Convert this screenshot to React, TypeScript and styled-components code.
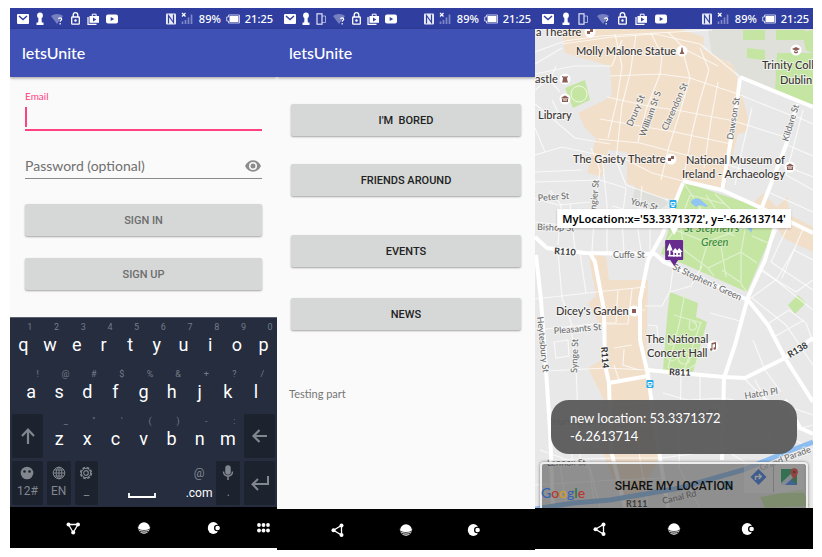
import React from 'react';
import styled, { createGlobalStyle } from 'styled-components';

const GlobalStyle = createGlobalStyle`
  * { box-sizing: border-box; }
  body {
    margin: 0;
    background: #fff;
    font-family: Lato, "Open Sans", sans-serif;
  }
  button, input { font-family: inherit; }
`;

const Page = styled.main`
  display: grid;
  grid-template-columns: 267fr 258fr 278fr;
  align-items: start;
  padding: 8px 9px 7px 10px;
`;

const Phone = styled.section`
  display: flex;
  flex-direction: column;
  min-width: 0;
  overflow: hidden;
`;

const StatusBar = styled.header`
  display: flex;
  align-items: center;
  height: 21px;
  padding: 0 4px 0 7px;
  background: #303f9f;
  color: #fff;
  font-family: "Noto Sans", sans-serif;
  font-size: 11px;
  font-weight: 500;
  line-height: 20px;
`;

const StatusIcons = styled.div<{ $gap: number }>`
  display: flex;
  align-items: center;
  gap: ${(p) => p.$gap}px;
  margin-right: auto;
`;

const StatusInfo = styled.div`
  display: flex;
  align-items: center;
  gap: 5px;
`;

const AppBar = styled.div`
  display: flex;
  align-items: center;
  height: 48px;
  padding: 0 12px;
  background: #3f51b5;
  color: #fff;
  box-shadow: 0 1px 3px rgba(0, 0, 0, 0.4);
  position: relative;
`;

const Title = styled.h1`
  margin: 0;
  font-size: 16px;
  font-weight: 500;
  line-height: 20px;
`;

const Form = styled.form`
  display: flex;
  flex-direction: column;
  height: 240px;
  padding: 12px 15px 0;
  background: #fafafa;
`;

const EmailLabel = styled.label`
  color: #ff4081;
  font-size: 10px;
  line-height: 14px;
`;

const EmailInput = styled.input`
  height: 28px;
  padding: 0 4px;
  border: 0;
  border-bottom: 2px solid #ff4081;
  outline: 0;
  font-size: 14px;
  background: linear-gradient(#ff4081, #ff4081) 0 4px / 2px 20px no-repeat;
`;

const PasswordRow = styled.div`
  display: flex;
  align-items: center;
  height: 26px;
  margin: 22px 0 25px;
  border-bottom: 1px solid #8a8a8a;
`;

const PasswordLabel = styled.label`
  color: #707070;
  font-size: 14px;
  line-height: 20px;
  white-space: nowrap;
`;

const PasswordInput = styled.input`
  flex: 1;
  min-width: 0;
  border: 0;
  outline: 0;
  background: none;
`;

const IconButton = styled.button`
  display: flex;
  align-items: center;
  justify-content: center;
  padding: 0;
  border: 0;
  background: none;
  color: inherit;
`;

const RaisedButton = styled.button<{ $muted?: boolean }>`
  flex: none;
  width: 100%;
  height: 32px;
  padding: 0;
  border: 0;
  border-radius: 2px;
  background: #d6d8d7;
  box-shadow: 0 1px 2px rgba(0, 0, 0, 0.35);
  color: ${(p) => (p.$muted ? '#6c6d6d' : '#222')};
  font-family: Roboto, sans-serif;
  font-size: 11px;
  font-weight: 500;
  white-space: pre;
`;

const SignButtons = styled.div`
  display: grid;
  gap: 22px;
`;

const Keyboard = styled.div`
  display: grid;
  grid-template-rows: repeat(4, 44px);
  gap: 3px;
  height: 190px;
  padding: 2px 0;
  border-top: 1px solid #5b6170;
  background: #252d3f;
  color: #fff;
  font-family: Roboto, sans-serif;
`;

const TopRow = styled.div`
  display: grid;
  grid-template-columns: repeat(10, 1fr);
`;

const HomeRow = styled.div`
  display: grid;
  grid-template-columns: repeat(9, 1fr);
  padding: 0 7px;
`;

const LowRow = styled.div`
  display: grid;
  grid-template-columns: 31fr repeat(7, 24fr) 31fr;
  gap: 4px;
  padding: 0 2px;
`;

const Key = styled.button`
  display: flex;
  flex-direction: column;
  align-items: center;
  padding: 0;
  border: 0;
  background: none;
  color: #fff;
  font-family: inherit;
  font-size: 18px;
  line-height: 22px;
`;

const Hint = styled.span`
  padding-left: 13px;
  color: #757b88;
  font-size: 9px;
  line-height: 14px;
`;

const FunctionKey = styled.button<{ $span?: number; $plain?: boolean }>`
  grid-column: span ${(p) => p.$span ?? 1};
  display: flex;
  flex-direction: column;
  align-items: center;
  justify-content: center;
  gap: 2px;
  padding: 0;
  border: 0;
  border-radius: 2px;
  background: ${(p) => (p.$plain ? 'none' : '#1d232e')};
  color: ${(p) => (p.$plain ? '#fff' : '#82868f')};
  font-family: inherit;
  font-size: 12px;
  line-height: 18px;
`;

const SpaceKey = styled(FunctionKey)`
  justify-content: flex-end;
  padding-bottom: 6px;
`;

const AtHint = styled.span`
  color: #82868f;
`;

const NavBar = styled.nav`
  display: grid;
  grid-template-columns: 1fr repeat(3, 26.5%) 1fr;
  align-items: center;
  justify-items: center;
  height: 41px;
  background: #000;
  color: #fff;
`;

const Menu = styled.div`
  display: flex;
  flex-direction: column;
  height: 432px;
  padding: 27px 14px 0;
  background: #fafafa;
`;

const MenuGroup = styled.div`
  display: grid;
  gap: 28px;
  margin-bottom: 39px;
`;

const MenuGroupWide = styled(MenuGroup)`
  gap: 31px;
  margin-bottom: 55px;
`;

const Note = styled.p`
  margin: 0 0 0 -2px;
  color: #757575;
  font-size: 11px;
  line-height: 18px;
`;

const MapScreen = styled.div`
  position: relative;
  display: flex;
  flex-direction: column;
  justify-content: flex-end;
  height: 479px;
  overflow: hidden;
  background: #e8e8e8;
`;

const MapDrawing = styled.svg`
  position: absolute;
  inset: 0;
  width: 100%;
  height: 100%;
`;

const Pin = styled.div`
  position: absolute;
  top: 180px;
  left: 50%;
  transform: translateX(-50%);
  display: flex;
  flex-direction: column;
  align-items: center;
`;

const PinInfo = styled.div`
  padding: 0 5px;
  background: #fff;
  box-shadow: 0 1px 2px rgba(0, 0, 0, 0.2);
  color: #000;
  font-family: "Noto Sans", sans-serif;
  font-size: 11px;
  font-weight: 600;
  line-height: 19px;
  white-space: nowrap;
`;

const Toast = styled.output`
  position: relative;
  z-index: 1;
  margin: 0 16px 8px;
  padding: 9px 19px;
  border-radius: 18px;
  background: rgba(88, 88, 88, 0.94);
  color: #fff;
  font-size: 13px;
  line-height: 18px;
  white-space: pre-line;
`;

const ShareButton = styled.button`
  position: relative;
  height: 46px;
  margin: 0 5px;
  padding: 0;
  border: 2px solid #eee;
  border-bottom: 0;
  border-radius: 4px 4px 0 0;
  background: rgba(70, 70, 70, 0.55);
  box-shadow: 0 0 3px rgba(0, 0, 0, 0.5);
  color: #111;
  font-family: Roboto, sans-serif;
  font-size: 12px;
  font-weight: 500;
`;

const MailIcon = () => (
  <svg width="12" height="12" viewBox="0 0 12 12">
    <rect y="1" width="12" height="10" rx="1" fill="#fff" />
    <path d="M2 3l4 3.500L10 3" fill="none" stroke="#303f9f" strokeWidth="1.400" />
  </svg>
);
const KeyholeIcon = () => (
  <svg width="8" height="14" viewBox="0 0 8 14" fill="#fff">
    <circle cx="4" cy="3.500" r="2.900" />
    <path d="M2.500 5h3l.3 5.500H7.500V13H.5v-2.500H2.200z" />
  </svg>
);
const DevicesIcon = () => (
  <svg width="11" height="12" viewBox="0 0 11 12" fill="none" stroke="#dfe2f4">
    <rect x="1" y=".8" width="5" height="10.400" strokeWidth="1.200" />
    <path d="M6 3h3.500v6.500H6" opacity=".65" />
  </svg>
);
const WifiIcon = () => (
  <svg width="13" height="12" viewBox="0 0 13 12">
    <path d="M0 3C3 .3 9 .3 12 3L6 11z" fill="#7680c0" />
    <path d="M7.500 6c.3-1.600 3.200-1.500 3.200.2 0 1.200-1.500 1.200-1.500 2.500M9.200 10v1.400" fill="none" stroke="#fff" strokeWidth="1.200" />
  </svg>
);
const LockIcon = () => (
  <svg width="9" height="13" viewBox="0 0 9 13" fill="none" stroke="#fff" strokeWidth="1.300">
    <rect x=".7" y="5" width="7.600" height="7.200" rx=".6" />
    <path d="M2.200 5V3a2.300 2.300 0 014.600 0v2" />
    <circle cx="4.500" cy="8.600" r=".6" fill="#fff" />
  </svg>
);
const StoreIcon = () => (
  <svg width="12" height="12" viewBox="0 0 12 12">
    <path d="M1 4v7.300h8.500" fill="none" stroke="#fff" strokeWidth="1.200" />
    <path d="M2.500 3H12v6.800H2.500z" fill="#fff" />
    <path d="M5.300 3V1.200h3.800V3" fill="none" stroke="#fff" />
    <path d="M6 4.500l3.300 2L6 8.500z" fill="#303f9f" />
  </svg>
);
const PlayIcon = () => (
  <svg width="12" height="12" viewBox="0 0 12 12">
    <rect y="1.500" width="12" height="9" rx="2" fill="#fff" />
    <path d="M4.700 4l3.500 2-3.500 2z" fill="#303f9f" />
  </svg>
);
const NfcIcon = () => (
  <svg width="10" height="12" viewBox="0 0 10 12">
    <rect y=".5" width="10" height="11" rx="1" fill="#e8eaf6" />
    <path d="M2.500 10.500V2.500L7.500 9.500V1.500" fill="none" stroke="#303f9f" strokeWidth="1.200" />
  </svg>
);
const SignalIcon = () => (
  <svg width="13" height="13" viewBox="0 0 13 13">
    <path d="M1 1l3.500 3.500M4.500 1L1 4.500" stroke="#fff" strokeWidth="1.200" />
    <path d="M1.500 12V9.500M4.500 12V8M7.500 12V5.500M10.500 12V2.500" stroke="#7f88c6" strokeWidth="1.700" />
  </svg>
);
const BatteryIcon = () => (
  <svg width="14" height="10" viewBox="0 0 14 10">
    <path d="M2.500 1h11v8h-11V7H.7V3h1.800z" fill="none" stroke="#c6cae8" />
    <path d="M3.500 2h9v6h-9z" fill="#fff" />
  </svg>
);

function Status({ devices = false, gap }: { devices?: boolean; gap: number }) {
  return (
    <StatusBar>
      <StatusIcons $gap={gap}>
        <MailIcon />
        <KeyholeIcon />
        {devices && <DevicesIcon />}
        <WifiIcon />
        <LockIcon />
        <StoreIcon />
        <PlayIcon />
      </StatusIcons>
      <StatusInfo>
        <NfcIcon />
        <SignalIcon />
        <span>89%</span>
        <BatteryIcon />
        <span>21:25</span>
      </StatusInfo>
    </StatusBar>
  );
}

const BackIcon = ({ down = false }: { down?: boolean }) => (
  <svg width="14" height="14" viewBox="0 0 14 14" fill="#fff">
    <g transform={down ? 'rotate(-90 7 7)' : undefined}>
      <path d="M2.500 7.200L10.500 2.500V12z" fill="none" stroke="#fff" strokeWidth="1.300" />
      <circle cx="2.500" cy="7.200" r="2" />
      <circle cx="10.500" cy="2.500" r="2" />
      <circle cx="10.500" cy="12" r="2" />
    </g>
  </svg>
);
const HomeIcon = () => (
  <svg width="14" height="14" viewBox="0 0 14 14">
    <circle cx="7" cy="7" r="5.800" fill="#fff" />
    <path d="M1 7.500c2.500 2.300 9.500 2.300 12 0M2.500 10c2.500 1.500 6.500 1.500 9 0" fill="none" stroke="#000" strokeWidth=".9" />
    <path d="M.8 6.500c2 2.500 10.400 2.500 12.400 0" fill="none" stroke="#fff" />
  </svg>
);
const RecentIcon = () => (
  <svg width="14" height="14" viewBox="0 0 14 14">
    <ellipse cx="6.300" cy="7" rx="5.500" ry="6" fill="#fff" />
    <circle cx="10.300" cy="7" r="3.300" fill="#000" />
    <circle cx="10.600" cy="7" r="2.300" fill="#fff" />
  </svg>
);
const DotsIcon = () => (
  <svg width="13" height="10" viewBox="0 0 13 10" fill="#fff">
    {[2, 6.5, 11].map((x) => [2, 7.5].map((y) => <circle key={`${x}-${y}`} cx={x} cy={y} r="1.900" />))}
  </svg>
);

function Navigation({ keyboard = false }: { keyboard?: boolean }) {
  return (
    <NavBar aria-label="System">
      <span />
      <IconButton aria-label="Back"><BackIcon down={keyboard} /></IconButton>
      <IconButton aria-label="Home"><HomeIcon /></IconButton>
      <IconButton aria-label="Recent apps"><RecentIcon /></IconButton>
      {keyboard && <IconButton aria-label="Switch keyboard"><DotsIcon /></IconButton>}
    </NavBar>
  );
}

const topKeys: [string, string][] = [
  ['q', '1'], ['w', '2'], ['e', '3'], ['r', '4'], ['t', '5'],
  ['y', '6'], ['u', '7'], ['i', '8'], ['o', '9'], ['p', '0'],
];
const homeKeys: [string, string][] = [
  ['a', '!'], ['s', '@'], ['d', '#'], ['f', '$'], ['g', '%'],
  ['h', '&'], ['j', '+'], ['k', '?'], ['l', '/'],
];
const lowKeys: [string, string][] = [
  ['z', '_'], ['x', '"'], ['c', "'"], ['v', '('], ['b', ')'], ['n', '-'], ['m', ':'],
];

const renderKeys = (keys: [string, string][]) =>
  keys.map(([letter, hint]) => (
    <Key key={letter} type="button">
      <Hint>{hint}</Hint>
      {letter}
    </Key>
  ));

const GreyLine = { fill: 'none', stroke: '#82868f' };

function OnScreenKeyboard() {
  return (
    <Keyboard>
      <TopRow>{renderKeys(topKeys)}</TopRow>
      <HomeRow>{renderKeys(homeKeys)}</HomeRow>
      <LowRow>
        <FunctionKey aria-label="Shift">
          <svg width="16" height="18" viewBox="0 0 16 18" {...GreyLine} strokeWidth="2.200">
            <path d="M8 17V3M2 9l6-6.500L14 9" />
          </svg>
        </FunctionKey>
        {renderKeys(lowKeys)}
        <FunctionKey aria-label="Backspace">
          <svg width="16" height="14" viewBox="0 0 16 14" {...GreyLine} strokeWidth="2.200">
            <path d="M16 7H3M8.500 1L2.500 7l6 6" />
          </svg>
        </FunctionKey>
      </LowRow>
      <LowRow>
        <FunctionKey>
          <svg width="14" height="14" viewBox="0 0 14 14">
            <circle cx="7" cy="7" r="6.300" fill="#82868f" />
            <circle cx="4.500" cy="5.500" r="1.300" fill="#1d232e" />
            <circle cx="9.500" cy="5.500" r="1.300" fill="#1d232e" />
          </svg>
          12#
        </FunctionKey>
        <FunctionKey>
          <svg width="14" height="14" viewBox="0 0 14 14" {...GreyLine}>
            <circle cx="7" cy="7" r="5.800" />
            <ellipse cx="7" cy="7" rx="2.800" ry="5.800" />
            <path d="M7 1v12M1 7h12M2 4h10M2 10h10" />
          </svg>
          EN
        </FunctionKey>
        <FunctionKey>
          <svg width="14" height="14" viewBox="0 0 14 14" {...GreyLine}>
            <circle cx="7" cy="7" r="5.400" strokeWidth="1.600" strokeDasharray="2.800 1.440" />
            <circle cx="7" cy="7" r="4.600" />
            <circle cx="7" cy="7" r="2.300" strokeWidth="1.200" />
          </svg>
          _
        </FunctionKey>
        <SpaceKey $span={3} $plain aria-label="Space">
          <svg width="28" height="6" viewBox="0 0 28 6" fill="none" stroke="#fff" strokeWidth="1.800">
            <path d="M1 0v4h26V0" />
          </svg>
        </SpaceKey>
        <FunctionKey $plain>
          <AtHint>@</AtHint>
          .com
        </FunctionKey>
        <FunctionKey>
          <svg width="12" height="16" viewBox="0 0 12 16" {...GreyLine} strokeWidth="1.500">
            <rect x="4" y="1" width="4" height="8" rx="2" fill="#82868f" />
            <path d="M1.500 6.500c0 6 9 6 9 0M6 11v4" />
          </svg>
          .
        </FunctionKey>
        <FunctionKey aria-label="Enter">
          <svg width="20" height="16" viewBox="0 0 20 16" {...GreyLine} strokeWidth="2">
            <path d="M18 1v8H3M8 4L2.500 9.200 8 15" />
          </svg>
        </FunctionKey>
      </LowRow>
    </Keyboard>
  );
}

function EyeIcon() {
  return (
    <svg width="18" height="14" viewBox="0 0 18 14">
      <path d="M1 7C4.500-.6 13.500-.6 17 7c-3.500 7.600-12.500 7.600-16 0z" fill="#8c8c8c" />
      <circle cx="9" cy="7" r="4" fill="#fafafa" />
      <circle cx="9" cy="7" r="2.500" fill="#8c8c8c" />
    </svg>
  );
}

const minorRoads = [
  'M535 52L565 41L600 36L712 30', 'M562 44L612 37L655 34L700 44L740 77', 'M535 74L574 66L612 66',
  'M535 64L562 48', 'M535 90L552 76L556 66', 'M535 104L575 138L610 144', 'M548 78L560 92',
  'M535 128L545 152L535 155', 'M545 152L562 147L590 153L627 160', 'M535 172L582 170', 'M552 100L558 112',
  'M615 34L622 66L617 100L608 138', 'M636 35L630 74L622 105L616 160', 'M651 33L662 55L660 74L646 110L638 142',
  'M682 48L690 78L680 112L668 150L661 180', 'M610 76L660 74L690 78L738 94', 'M607 97L648 106L682 111L734 121',
  'M600 119L640 126L675 132L731 144', 'M598 139L640 143L670 151L728 165', 'M700 48L709 70L700 100L692 133L683 180',
  'M668 32L686 50L718 66', 'M625 52L652 56L684 52', 'M612 66L622 40', 'M718 82L711 120L704 168',
  'M627 160L652 173L683 181', 'M616 160L626 185L668 200', 'M738 94L775 109L793 116', 'M734 121L788 138',
  'M728 165L776 180', 'M752 108L742 150L735 185', 'M795 116L813 124', 'M787 145L813 156', 'M780 164L813 177',
  'M803 110L786 175L813 190', 'M768 192L813 212',
  'M591 148L600 170L595 206L592 251', 'M602 155L607 205L607 252', 'M535 198L558 205L590 202', 'M535 222L590 228',
  'M550 190L561 205L558 245', 'M570 204L575 250', 'M590 222L660 226', 'M626 188L622 220L624 252',
  'M642 186L638 230L641 250', 'M535 182L600 180L626 188', 'M612 206L662 220', 'M650 210L650 252',
  'M535 299L605 291L646 287', 'M535 330L604 323', 'M546 371L607 368L647 370', 'M571 325L576 368L580 460',
  'M554 342L568 340L569 356L556 358z', 'M558 252L562 298L572 325', 'M580 253L586 293', 'M618 290L616 323L604 323',
  'M632 289L628 324L606 324', 'M614 348L632 345M614 365L620 383M624 349L623 365L639 370', 'M600 315L645 310',
  'M645 306L662 306L670 291L674 262', 'M648 325L657 326L658 338L647 338', 'M702 266L691 286L670 292',
  'M710 313L740 321', 'M780 222L760 270L796 292L813 280', 'M790 222L771 262L813 290', 'M803 229L782 278',
  'M763 270L813 310', 'M748 300L777 279L794 250L813 260', 'M766 325L789 310L806 323L813 342',
  'M774 337L804 320', 'M752 298L786 325L813 365', 'M753 340L765 370L781 392', 'M745 379L763 398L813 415',
  'M724 398L770 408L795 440L813 450', 'M755 380L772 412L768 440', 'M681 373L679 470', 'M700 375L700 400L735 415',
  'M550 410L612 405L653 402L724 398', 'M548 431L612 430L657 424', 'M553 460L616 458L661 458L722 450L813 425',
  'M663 393L718 409L725 450', 'M560 465L566 502', 'M588 460L594 500', 'M680 470L700 508', 'M725 450L758 470',
  'M535 485L614 480L665 478', 'M570 405L572 460', 'M635 405L640 460L648 505', 'M540 450L590 468L600 508',
];

const mainRoads = [
  'M740 78L736 110L722 191', 'M740 77L813 107', 'M683 181L722 190L770 212L813 233', 'M797 104L786 145L762 207',
  'M778 216L765 260L748 297L735 345L724 378L722 460', 'M535 237L547 248L585 253L655 254L664 262L748 300',
  'M748 300L768 325L785 358L813 402', 'M647 370L724 377L745 378L785 358L813 338',
  'M590 253L595 262L604 310L605 365L609 383L611 450L625 508', 'M609 383L648 376',
  'M683 183L662 235L648 260L640 300L640 340L648 375L654 420L668 508',
  'M536 255L541 300L546 370L550 430L553 508', 'M785 400L800 428L813 434',
];

const parkPaths = [
  'M684 183L700 208L680 222L661 250', 'M670 228L706 242L755 224L774 220', 'M690 195L725 204L746 224L741 252L708 268L684 250L680 222L690 195',
  'M706 195L718 212L744 218L768 212', 'M725 204L715 194', 'M708 242L700 268', 'M720 240L726 277', 'M741 252L757 263', 'M741 252L741 284L747 292',
  'M684 250L666 253', 'M700 207L706 225L735 236', 'M752 236L768 243', 'M708 268L714 276M740 282L722 270',
  'M674 315L702 323M685 292L679 325L668 368M701 322L684 371M668 345L694 340M690 319L689 328A4 4 0 1 0 692 322',
  'M684 352A6 6 0 1 0 684 364A6 6 0 1 0 684 352M672 352A4 4 0 1 0 672 361A4 4 0 1 0 672 352M696 350L700 362L690 368',
];

type Label = { x: number; y: number; t: string; r?: number };

const placeLabels: Label[] = [
  { x: 536, y: 36, t: 'a Theatre' }, { x: 576, y: 55, t: 'Molly Malone Statue' }, { x: 535, y: 83, t: 'astle' },
  { x: 538, y: 119, t: 'Library' }, { x: 762, y: 69, t: 'Trinity Coll' }, { x: 780, y: 84, t: 'Dublin' },
  { x: 573, y: 163, t: 'The Gaiety Theatre' }, { x: 686, y: 164, t: 'National Museum of' },
  { x: 682, y: 178, t: 'Ireland - Archaeology' }, { x: 556, y: 315, t: "Dicey's Garden" },
  { x: 646, y: 343, t: 'The National' }, { x: 647, y: 357, t: 'Concert Hall' },
];
const streetLabels: Label[] = [
  { x: 632, y: 127, t: 'Drury St', r: -67 }, { x: 645, y: 137, t: 'William St S', r: -70 },
  { x: 667, y: 131, t: 'Clarendon St', r: -66 }, { x: 733, y: 140, t: 'Dawson St', r: -81 },
  { x: 788, y: 142, t: 'Kildare St', r: -73 }, { x: 538, y: 201, t: 'Peter St', r: -4 },
  { x: 596, y: 210, t: 'ngier St', r: -84 }, { x: 630, y: 204, t: 'York St', r: 14 },
  { x: 537, y: 230, t: 'Bishop St', r: 2 }, { x: 613, y: 258, t: 'Cuffe St' },
  { x: 672, y: 269, t: "St Stephen's Green", r: 25 }, { x: 554, y: 334, t: 'Pleasants St', r: -5 },
  { x: 577, y: 373, t: 'Synge St', r: -88 }, { x: 537, y: 317, t: 'Heytesbury St', r: 84 },
  { x: 745, y: 399, t: 'Hatch Pl', r: -9 }, { x: 553, y: 425, t: 'Harrington St' },
  { x: 671, y: 416, t: 'Adelaide Rd' }, { x: 547, y: 466, t: 'Lennox St', r: -1 },
  { x: 761, y: 471, t: 'Grand Parade', r: -21 }, { x: 663, y: 504, t: 'Canal Rd', r: -13 },
];
const routeLabels: Label[] = [
  { x: 554, y: 254, t: 'R110', r: 4 }, { x: 601, y: 347, t: 'R114', r: 86 }, { x: 669, y: 375, t: 'R811', r: 2 },
  { x: 790, y: 358, t: 'R138', r: -31 }, { x: 626, y: 507, t: 'R111' },
];

const MapText = styled.text<{ $kind: 'place' | 'street' | 'route' | 'park' }>`
  font-family: Lato, "Open Sans", sans-serif;
  font-size: ${(p) => (p.$kind === 'place' || p.$kind === 'park' ? 11 : 9)}px;
  font-weight: ${(p) => (p.$kind === 'route' ? 700 : 500)};
  font-style: ${(p) => (p.$kind === 'park' ? 'italic' : 'normal')};
  fill: ${(p) => ({ place: '#3a3532', street: '#6e6e6e', route: '#333', park: '#3c8a34' })[p.$kind]};
  stroke: ${(p) => (p.$kind === 'park' ? '#d3ecc0' : '#f8f8f8')};
  stroke-width: 2px;
  stroke-opacity: 0.7;
  paint-order: stroke;
`;

const drawLabels = (labels: Label[], kind: 'place' | 'street' | 'route') =>
  labels.map((l) => (
    <MapText key={l.t} $kind={kind} x={l.x} y={l.y} transform={l.r ? `rotate(${l.r} ${l.x} ${l.y})` : undefined}>
      {l.t}
    </MapText>
  ));

const poiGlyphs: { x: number; y: number; d: string }[] = [
  { x: 590, y: 32, d: 'M-3-1h3v3h-3zM0-3h3v3h-3z' },
  { x: 682, y: 51, d: 'M-.5-3.500h1l.5 4 1.500 2.500h-5l1.500-2.500z' },
  { x: 565, y: 79, d: 'M-3-3h1.500v1h1v-1h1v1h1v-1H3l-1 2.500L2.500 2 3 3.500h-6L-2.500 2-2-.5z' },
  { x: 565, y: 99, d: 'M0-3.500l3.500 2v1h-7v-1zM-3 0h1.500v2h1V0h1v2h1V0H3v3h-6z' },
  { x: 796, y: 50, d: 'M0-3l4 2-4 2-4-2zM-2 1l2 1 2-1v1.500l-2 1-2-1z' },
  { x: 671, y: 159, d: 'M-3-1h3v3h-3zM0-3h3v3h-3z' },
  { x: 790, y: 167, d: 'M0-3.500l3.500 2v1h-7v-1zM-3 0h1.500v2h1V0h1v2h1V0H3v3h-6z' },
  { x: 634, y: 311, d: 'M-2-2h4v4h-4z' },
  { x: 713, y: 346, d: 'M-1.500-3L3-4v6.500a1.300 1.300 0 11-1-1.300V-2l-2.500.5v5a1.300 1.300 0 11-1-1.300z' },
];

function CityMap() {
  return (
    <MapDrawing viewBox="535 29 278 479" preserveAspectRatio="xMidYMin slice">
      <rect x="535" y="29" width="278" height="479" fill="#e8e8e8" />
      <path d="M708 29H813V107L740 77L730 62L712 56z" fill="#dfe0da" />
      <path d="M636 183L658 190L668 204L655 213L632 202z" fill="#dedfda" />
      <g fill="#f1dfca">
        <path d="M561 29H680L704 37L703 49L733 65L738 80L748 118L747 132L738 134L734 150L724 192L683 181L677 200L656 196L627 183V152L608 150L602 177L587 173L596 138L585 128L578 113L603 101L612 95L610 66L565 53z" />
        <path d="M753 203L763 193L777 207L787 197L790 215L813 227V252L783 238L770 211z" />
        <path d="M588 252L606 257L609 280H648L646 380L656 420L660 455L634 508H625L600 445L604 400L588 368L605 358L603 330L588 303L596 296z" />
      </g>
      <g fill="#c5e5a3">
        <path d="M684 182L771 211L777 222L747 292L661 254z" />
        <path d="M670 292L698 303L696 317L707 322L693 372L663 370L667 318z" />
        <path d="M777 53H813V107L775 92zM743 30H765V40H743zM776 30H805V40H776zM747 48L765 50V60L747 58zM802 32L813 30V53L806 50z" />
        <path d="M565 88L585 80L590 100L573 108zM798 295L806 303L795 314L788 305zM760 497L803 489L809 506L765 508z" />
      </g>
      <g fill="none" stroke="#fff">
        {minorRoads.map((d) => <path key={d} d={d} strokeWidth="1.200" opacity=".7" />)}
        <circle cx="579" cy="94" r="8" strokeWidth="1" opacity=".7" />
        {mainRoads.map((d) => <path key={d} d={d} strokeWidth="4" strokeLinejoin="round" />)}
      </g>
      <g fill="none" stroke="#dff1cd" strokeWidth="1.200">
        {parkPaths.map((d) => <path key={d} d={d} />)}
      </g>
      <path d="M691 203C691 198 699 197 702 201L708 206C705 209 702 202 696 207zM748 228l4-7 2 3-3 9z" fill="#8fc4f3" />
      <path d="M535 509L573 503L610 500L680 488L743 470L784 453L813 442" fill="none" stroke="#8dbdf0" strokeWidth="5" />
      {poiGlyphs.map((g) => (
        <g key={`${g.x}-${g.y}`} transform={`translate(${g.x} ${g.y})`}>
          <circle r="5.500" fill="#fff" />
          <path d={g.d} fill="#8a5d55" />
        </g>
      ))}
      {drawLabels(streetLabels, 'street')}
      {drawLabels(routeLabels, 'route')}
      {drawLabels(placeLabels, 'place')}
      <MapText $kind="park" x="684" y="232">St Stephen's</MapText>
      <MapText $kind="park" x="701" y="246">Green</MapText>
      {[[673, 204], [650, 384], [727, 485]].map(([x, y]) => (
        <g key={x} transform={`translate(${x} ${y})`}>
          <rect x="-3.500" y="-4" width="7" height="8" rx="1" fill="#27abe8" />
          <path d="M-2-1.500h4v2.500h-4zM-1.500 2.500h3" stroke="#fff" fill="none" />
        </g>
      ))}
      <rect x="744" y="463" width="60" height="30" fill="#fff" opacity=".5" />
      <path d="M773.500 465v27" stroke="#bbb" />
      <path d="M758.500 469l8 8-8 8-8-8z" fill="#3b78e7" />
      <path d="M755.500 480v-3.500h5M758.800 474l2.500 2.500-2.500 2.500" stroke="#fff" fill="none" strokeWidth="1.400" />
      <path d="M781 469h16v16h-16z" fill="#1fa463" />
      <path d="M781 485l8-8 8 8z" fill="#4285f4" />
      <path d="M781 483l14-13 2 2v2l-12 11h-4z" fill="#f5f5f5" opacity=".8" />
      <path d="M794 482c0-5-3.500-6-3.500-10a3.700 3.700 0 017.400 0c0 4-3.900 5-3.900 10z" fill="#e8453c" />
      <circle cx="794.200" cy="472" r="1.300" fill="#8c1f1a" />
    </MapDrawing>
  );
}

const Logo = styled.div`
  position: absolute;
  left: 6px;
  bottom: 6px;
  z-index: 1;
  font-size: 14px;
  line-height: 18px;
  font-weight: 500;
`;

const LogoLetter = styled.span<{ $color: string }>`
  color: ${(p) => p.$color};
`;

const logoLetters: [string, string][] = [
  ['G', '#3562b0'], ['o', '#b8372d'], ['o', '#d3a020'], ['g', '#3562b0'], ['l', '#25733c'], ['e', '#b8372d'],
];

function PinMarker() {
  return (
    <svg width="22" height="40" viewBox="0 0 22 40">
      <path d="M7 0h8l-4 7z" fill="#fff" />
      <path d="M3 12h16a1 1 0 011 1v18a1 1 0 01-1 1h-4l-4 6-4-6H3a1 1 0 01-1-1V13a1 1 0 011-1z" fill="#662b8d" />
      <path d="M6.500 15l1.300 3 1.700 4.500H7.300V28H5.700v-5.500H3.500L5.200 18z" fill="#fff" />
      <path d="M9 24l3-4 2.200 2.500L16 20l3.500 4H18v4.500h-1.500V25H15v3.500h-2V25h-1.500v3.500H10V24z" fill="#fff" />
      <path d="M5 27h13v1.500H5z" fill="#fff" />
    </svg>
  );
}

export default function App() {
  return (
    <>
      <GlobalStyle />
      <Page>
        <Phone>
          <Status gap={7} />
          <AppBar><Title>letsUnite</Title></AppBar>
          <Form onSubmit={(e) => e.preventDefault()}>
            <EmailLabel htmlFor="email">Email</EmailLabel>
            <EmailInput id="email" type="email" />
            <PasswordRow>
              <PasswordLabel htmlFor="password">Password (optional)</PasswordLabel>
              <PasswordInput id="password" type="password" />
              <IconButton type="button" aria-label="Show password"><EyeIcon /></IconButton>
            </PasswordRow>
            <SignButtons>
              <RaisedButton $muted>SIGN IN</RaisedButton>
              <RaisedButton $muted type="button">SIGN UP</RaisedButton>
            </SignButtons>
          </Form>
          <OnScreenKeyboard />
          <Navigation keyboard />
        </Phone>
        <Phone>
          <Status devices gap={6} />
          <AppBar><Title>letsUnite</Title></AppBar>
          <Menu>
            <MenuGroup>
              <RaisedButton>{"I'M  BORED"}</RaisedButton>
              <RaisedButton>FRIENDS AROUND</RaisedButton>
            </MenuGroup>
            <MenuGroupWide>
              <RaisedButton>EVENTS</RaisedButton>
              <RaisedButton>NEWS</RaisedButton>
            </MenuGroupWide>
            <Note>Testing part</Note>
          </Menu>
          <Navigation />
        </Phone>
        <Phone>
          <Status devices gap={8} />
          <MapScreen>
            <CityMap />
            <Pin>
              <PinInfo>MyLocation:x='53.3371372', y='-6.2613714'</PinInfo>
              <PinMarker />
            </Pin>
            <Toast>{'new location: 53.3371372\n-6.2613714'}</Toast>
            <ShareButton>SHARE MY LOCATION</ShareButton>
            <Logo>
              {logoLetters.map(([letter, color], i) => (
                <LogoLetter key={i} $color={color}>{letter}</LogoLetter>
              ))}
            </Logo>
          </MapScreen>
          <Navigation />
        </Phone>
      </Page>
    </>
  );
}
